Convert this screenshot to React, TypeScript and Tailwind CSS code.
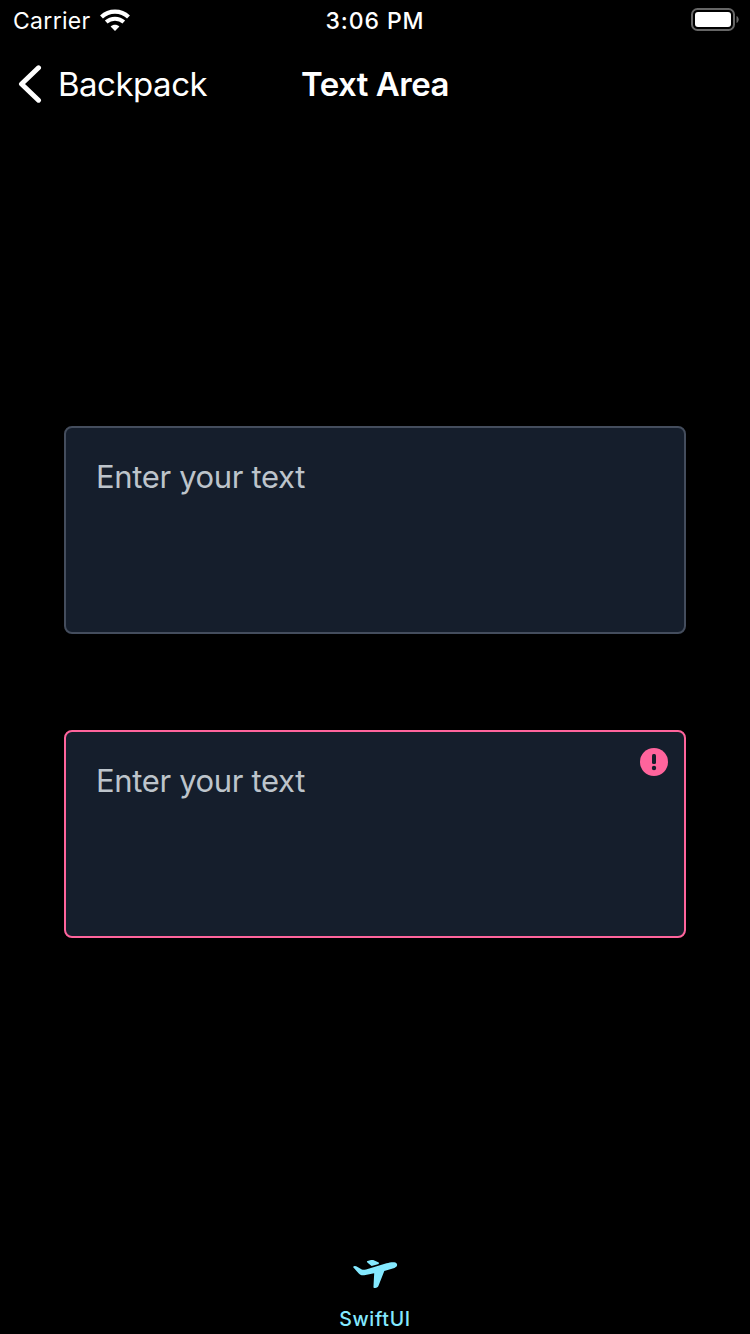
import React from "react";

function StatusBar() {
  return (
    <header className="grid h-10 grid-cols-3 items-center pl-[13px] pr-[11px] text-[23px] leading-10">
      <div className="flex items-center gap-[9px]">
        <span className="pt-0.5 leading-[38px] tracking-[0.3px]">Carrier</span>
        <svg width="30" height="22" viewBox="0 0 30 22" fill="none">
          <path d="M1.5 8C9 0.9 21 0.9 28.5 8" stroke="white" strokeWidth="4.2" />
          <path d="M6.2 13C11 8.6 19 8.6 23.8 13" stroke="white" strokeWidth="3.9" />
          <path d="M10.6 17.4C13 15.2 17 15.2 19.4 17.4L15 21.9Z" fill="white" />
        </svg>
      </div>
      <span className="pt-0.5 pr-0.5 text-center leading-[38px] font-medium tracking-[0.9px] whitespace-nowrap">3:06 PM</span>
      <svg className="justify-self-end" width="49" height="24" viewBox="0 0 49 24" fill="none">
        <rect x="2" y="1" width="42" height="21" rx="5.5" stroke="#666" strokeWidth="2" />
        <rect x="5" y="4" width="36" height="15" rx="3" fill="white" />
        <path d="M46.5 8C49.4 9.2 49.4 13.8 46.5 15Z" fill="#666" />
      </svg>
    </header>
  );
}

function NavigationBar() {
  return (
    <nav className="grid h-[88px] grid-cols-3 items-center px-[18px] text-[33px]">
      <button className="flex items-center gap-4 text-left">
        <svg width="24" height="38" viewBox="0 0 24 38" fill="none">
          <path d="M20.5 2.8L3.5 19L20.5 35.2" stroke="white" strokeWidth="5" strokeLinecap="round" strokeLinejoin="round" />
        </svg>
        <span className="pt-0.5 tracking-[-0.5px]">Backpack</span>
      </button>
      <h1 className="pt-0.5 text-center font-semibold tracking-[-0.5px] whitespace-nowrap">Text Area</h1>
    </nav>
  );
}

function TextArea({ invalid = false }: { invalid?: boolean }) {
  return (
    <div
      className={
        invalid
          ? "flex h-[208px] items-start justify-between rounded-lg border-2 border-[#ff649c] bg-[#151e2c] pt-4 pr-4 pl-[30px]"
          : "flex h-[208px] items-start justify-between rounded-lg border-2 border-[#444d5d] bg-[#151e2c] pt-4 pr-4 pl-[30px]"
      }
    >
      <span className="pt-[13px] text-[31px] leading-10 tracking-[-0.35px] text-[#bdc4cb]">Enter your text</span>
      {invalid && (
        <svg width="28" height="28" viewBox="0 0 28 28">
          <circle cx="14" cy="14" r="14" fill="#ff649c" />
          <rect x="12" y="6" width="4" height="10" rx="1.5" fill="#151e2c" />
          <circle cx="14" cy="20" r="2.2" fill="#151e2c" />
        </svg>
      )}
    </div>
  );
}

function TabBar() {
  return (
    <footer className="flex h-[98px] flex-col items-center pt-6 text-[#84e9ff]">
      <svg width="46" height="30" viewBox="0 0 46 30" fill="currentColor">
        <path d="M1 7C2.2 5.2 4 6.1 5.6 7L9.8 9.4C11.2 10.2 12.6 9.8 14 9.4L34.5 3.3C38.5 2.1 43.6 1.3 44.8 3.7C46 6.1 43.8 7.6 40.7 8.5L32.3 10.9L26.5 25.8C25.9 27.4 24.8 28 22.7 27.9C21.4 27.9 21.4 27.2 21.5 25.9L22.2 13.3L12.2 15.2C9.6 15.7 7.9 14.6 6.3 13Z" />
        <path d="M15.6 0.9L19.1 0.1C20.2 -0.1 21.2 0 22.3 0.5L26.8 2.4V4L19.6 5.9L15.6 2.7C14.6 1.9 14.6 1.2 15.6 0.9Z" />
      </svg>
      <span className="mt-4 text-[19.5px] font-medium leading-[26px] tracking-[0.7px]">SwiftUI</span>
    </footer>
  );
}

export default function App() {
  return (
    <div className="flex h-[1334px] w-[750px] flex-col overflow-hidden bg-black font-['Inter','Liberation_Sans',sans-serif] text-white">
      <StatusBar />
      <NavigationBar />
      <main className="flex flex-1 flex-col justify-center gap-24 px-16">
        <TextArea />
        <TextArea invalid />
      </main>
      <TabBar />
    </div>
  );
}
